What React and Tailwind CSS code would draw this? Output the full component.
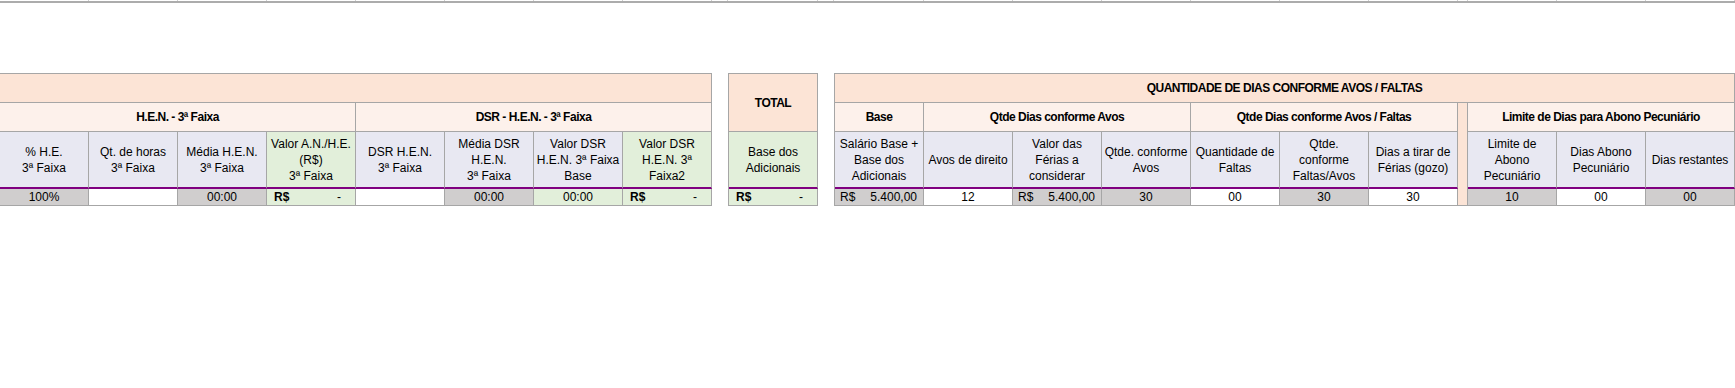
import React from "react";

const PEACH = "bg-[#fce4d6]";
const PEACH2 = "bg-[#fdf1eb]";
const LAV = "bg-[#e8e8f2]";
const GREEN = "bg-[#e2efda]";
const GRAY = "bg-[#d0cece]";
const WHITE = "bg-white";

const cellBorder = "border-r border-b border-[#a6a6a6]";
const boldHead = "font-bold text-[12px] tracking-[-0.5px]";

function Head({ lines, bg }) {
  return (
    <div
      className={`flex flex-col items-center justify-center text-center leading-[16px] whitespace-nowrap border-r border-r-[#a6a6a6] border-b-2 border-b-[#800080] ${bg}`}
    >
      {lines.map((l, i) => (
        <div key={i}>{l}</div>
      ))}
    </div>
  );
}

function Data({ value, bg, kind }) {
  if (kind === "money0") {
    return (
      <div className={`flex items-center justify-between pl-[7px] pr-[14px] leading-[16px] ${cellBorder} ${bg}`}>
        <span className="font-bold">R$</span>
        <span>-</span>
      </div>
    );
  }
  if (kind === "money") {
    return (
      <div className={`flex items-center justify-between pl-[5px] pr-[6px] leading-[16px] ${cellBorder} ${bg}`}>
        <span>R$</span>
        <span>{value}</span>
      </div>
    );
  }
  return (
    <div className={`flex items-center justify-center leading-[16px] ${cellBorder} ${bg}`}>
      {value}
    </div>
  );
}

const leftCols = [
  { h: ["% H.E.", "3ª Faixa"], hb: LAV, v: "100%", db: GRAY },
  { h: ["Qt. de horas", "3ª Faixa"], hb: LAV, v: "", db: WHITE },
  { h: ["Média H.E.N.", "3ª Faixa"], hb: LAV, v: "00:00", db: GRAY },
  { h: ["Valor A.N./H.E.", "(R$)", "3ª Faixa"], hb: GREEN, v: "", db: GREEN, kind: "money0" },
  { h: ["DSR H.E.N.", "3ª Faixa"], hb: LAV, v: "", db: WHITE },
  { h: ["Média DSR", "H.E.N.", "3ª Faixa"], hb: LAV, v: "00:00", db: GRAY },
  { h: ["Valor DSR", "H.E.N. 3ª Faixa", "Base"], hb: LAV, v: "00:00", db: GREEN },
  { h: ["Valor DSR", "H.E.N. 3ª", "Faixa2"], hb: GREEN, v: "", db: GREEN, kind: "money0" },
];

const rightColsA = [
  { h: ["Salário Base +", "Base dos", "Adicionais"], hb: LAV, v: "5.400,00", db: GRAY, kind: "money" },
  { h: ["Avos de direito"], hb: LAV, v: "12", db: WHITE },
  { h: ["Valor das", "Férias a", "considerar"], hb: LAV, v: "5.400,00", db: GRAY, kind: "money" },
  { h: ["Qtde. conforme", "Avos"], hb: LAV, v: "30", db: GRAY },
  { h: ["Quantidade de", "Faltas"], hb: LAV, v: "00", db: WHITE },
  { h: ["Qtde.", "conforme", "Faltas/Avos"], hb: LAV, v: "30", db: GRAY },
  { h: ["Dias a tirar de", "Férias (gozo)"], hb: LAV, v: "30", db: WHITE },
];

const rightColsB = [
  { h: ["Limite de", "Abono", "Pecuniário"], hb: LAV, v: "10", db: GRAY },
  { h: ["Dias Abono", "Pecuniário"], hb: LAV, v: "00", db: WHITE },
  { h: ["Dias restantes"], hb: LAV, v: "00", db: GRAY },
];

function TopStrip() {
  const widths = [89, 89, 89, 89, 89, 89, 89, 89, 16, 90, 16, 90, 89, 89, 89, 89, 89, 89, 10, 89, 89, 89];
  return (
    <div>
      <div className="flex h-[1px]">
        {widths.map((w, i) => (
          <div key={i} style={{ width: w }} className="h-[1px] border-r border-r-[#d0d0d0]" />
        ))}
      </div>
      <div className="h-[2px] w-full bg-[#acacac]" />
    </div>
  );
}

export default function App() {
  return (
    <div className="w-[1735px] h-[388px] bg-white text-black text-[12px] font-['Liberation_Sans',Arial,sans-serif] overflow-hidden">
      <TopStrip />
      <div className="mt-[70px] flex items-start">
        {/* Left section */}
        <div className="w-[712px] border-t border-[#a6a6a6] grid grid-cols-[repeat(8,89px)] grid-rows-[29px_29px_57px_17px]">
          <div className={`col-span-8 ${cellBorder} ${PEACH}`} />
          <div className={`col-span-4 flex items-center justify-center ${boldHead} ${cellBorder} ${PEACH2}`}>
            H.E.N. - 3ª Faixa
          </div>
          <div className={`col-span-4 flex items-center justify-center ${boldHead} ${cellBorder} ${PEACH2}`}>
            DSR - H.E.N. - 3ª Faixa
          </div>
          {leftCols.map((c, i) => (
            <Head key={"h" + i} lines={c.h} bg={c.hb} />
          ))}
          {leftCols.map((c, i) => (
            <Data key={"d" + i} value={c.v} bg={c.db} kind={c.kind} />
          ))}
        </div>

        {/* Total section */}
        <div className="ml-[16px] w-[90px] border-l border-t border-[#a6a6a6] grid grid-cols-[89px] grid-rows-[58px_57px_17px]">
          <div className={`flex items-center justify-center ${boldHead} ${cellBorder} ${PEACH}`}>TOTAL</div>
          <Head lines={["Base dos", "Adicionais"]} bg={GREEN} />
          <Data kind="money0" bg={GREEN} />
        </div>

        {/* Right section */}
        <div className="ml-[16px] w-[901px] border-l border-t border-[#a6a6a6] flex flex-col">
          <div className={`h-[29px] flex items-center justify-center ${boldHead} ${cellBorder} ${PEACH}`}>
            QUANTIDADE DE DIAS CONFORME AVOS / FALTAS
          </div>
          <div className="flex">
            <div className="grid grid-cols-[repeat(7,89px)] grid-rows-[29px_57px_17px]">
              <div className={`flex items-center justify-center ${boldHead} ${cellBorder} ${PEACH2}`}>Base</div>
              <div className={`col-span-3 flex items-center justify-center ${boldHead} ${cellBorder} ${PEACH2}`}>
                Qtde Dias conforme Avos
              </div>
              <div className={`col-span-3 flex items-center justify-center ${boldHead} ${cellBorder} ${PEACH2}`}>
                Qtde Dias conforme Avos / Faltas
              </div>
              {rightColsA.map((c, i) => (
                <Head key={"rh" + i} lines={c.h} bg={c.hb} />
              ))}
              {rightColsA.map((c, i) => (
                <Data key={"rd" + i} value={c.v} bg={c.db} kind={c.kind} />
              ))}
            </div>
            <div className={`w-[10px] h-[103px] ${cellBorder} ${PEACH}`} />
            <div className="grid grid-cols-[repeat(3,89px)] grid-rows-[29px_57px_17px]">
              <div className={`col-span-3 flex items-center justify-center ${boldHead} ${cellBorder} ${PEACH2}`}>
                Limite de Dias para Abono Pecuniário
              </div>
              {rightColsB.map((c, i) => (
                <Head key={"bh" + i} lines={c.h} bg={c.hb} />
              ))}
              {rightColsB.map((c, i) => (
                <Data key={"bd" + i} value={c.v} bg={c.db} kind={c.kind} />
              ))}
            </div>
          </div>
        </div>
      </div>
    </div>
  );
}
